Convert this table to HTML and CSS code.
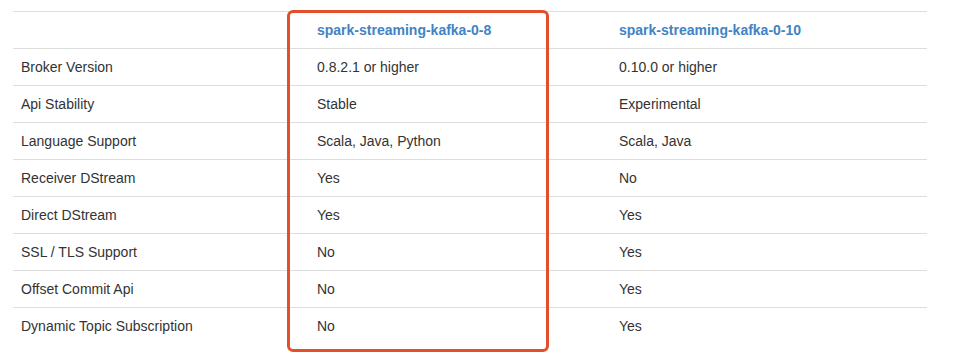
FILE: index.html
```html
<!DOCTYPE html>
<html>
<head>
<meta charset="utf-8">
<link rel="stylesheet" href="styles.css">
</head>
<body>
<div class="wrap">
  <table class="cmp">
    <thead>
      <tr><th></th><th>spark-streaming-kafka-0-8</th><th>spark-streaming-kafka-0-10</th></tr>
    </thead>
    <tbody>
      <tr><td>Broker Version</td><td>0.8.2.1 or higher</td><td>0.10.0 or higher</td></tr>
      <tr><td>Api Stability</td><td>Stable</td><td>Experimental</td></tr>
      <tr><td>Language Support</td><td>Scala, Java, Python</td><td>Scala, Java</td></tr>
      <tr><td>Receiver DStream</td><td>Yes</td><td>No</td></tr>
      <tr><td>Direct DStream</td><td>Yes</td><td>Yes</td></tr>
      <tr><td>SSL / TLS Support</td><td>No</td><td>Yes</td></tr>
      <tr><td>Offset Commit Api</td><td>No</td><td>Yes</td></tr>
      <tr><td>Dynamic Topic Subscription</td><td>No</td><td>Yes</td></tr>
    </tbody>
  </table>
  <div class="highlight"></div>
</div>
</body>
</html>
```
FILE: styles.css
```css
html, body { margin: 0; padding: 0; background: #fff; }
body { font-family: "Liberation Sans", Arial, sans-serif; font-size: 14px; color: #333; }
.wrap { position: relative; padding: 11px 13px; }
.cmp { border-collapse: collapse; width: 914px; table-layout: fixed; }
.cmp th, .cmp td { border-top: 1px solid #ddd; height: 36px; padding: 0 8px; text-align: left; vertical-align: middle; }
.cmp th { font-weight: bold; color: #4183c4; }
.cmp th:nth-child(1), .cmp td:nth-child(1) { width: 280px; }
.cmp th:nth-child(2), .cmp td:nth-child(2) { width: 286px; }
.highlight { position: absolute; left: 287px; top: 10px; width: 256px; height: 336px; border: 3px solid #e2502b; border-radius: 6px; }
```
